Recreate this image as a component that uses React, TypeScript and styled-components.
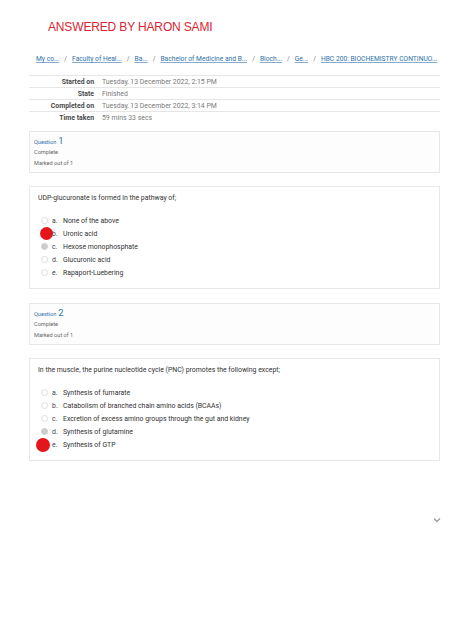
import styled, { createGlobalStyle } from "styled-components";

const GlobalStyle = createGlobalStyle`
    html, body {
        margin: 0;
        padding: 0;
        background: #fff;
    }
    body {
        font-family: Roboto, "Liberation Sans", Arial, sans-serif;
        color: #333;
    }
`

const Page = styled.div`
    width: 474px;
    min-height: 632px;
    box-sizing: border-box;
    padding: 0 34px 0 29px;
    display: flex;
    flex-direction: column;
    position: relative;
`

const Title = styled.h1`
    margin: 18px 0 0 19px;
    font-family: "Liberation Sans", Arial, sans-serif;
    font-weight: 400;
    font-size: 12px;
    line-height: 18px;
    color: #db2430;
    letter-spacing: -0.15px;
`

const Crumbs = styled.nav`
    margin: 18px 0 0 7px;
    display: flex;
    align-items: center;
    gap: 5px;
    font-size: 6.7px;
    line-height: 10px;
    white-space: nowrap;
`

const Crumb = styled.a`
    color: #2f72aa;
    text-decoration: underline;
    text-decoration-color: #86abcd;
`

const Slash = styled.span`
    color: #777;
`

const Summary = styled.div`
    margin-top: 11px;
    border-top: 1px solid #e6e6e6;
    display: flex;
    flex-direction: column;
`

const SummaryRow = styled.div<{ last?: boolean }>`
    display: grid;
    grid-template-columns: 65px 1fr;
    column-gap: 8px;
    height: 11px;
    align-items: center;
    font-size: 6.9px;
    border-bottom: ${p => p.last ? 'none' : '1px solid #e6e6e6'};
`

const SummaryLabel = styled.span`
    text-align: right;
    font-weight: 700;
    color: #4a4a4a;
`

const SummaryValue = styled.span`
    color: #7a7a7a;
`

const InfoBox = styled.div<{ top: number }>`
    margin-top: ${p => p.top}px;
    height: 42px;
    box-sizing: border-box;
    border: 1px solid #e8e8e8;
    background: #fdfdfd;
    padding: 3px 4px 0;
    display: flex;
    flex-direction: column;
`

const QuestionNo = styled.div`
    height: 12px;
    display: flex;
    align-items: baseline;
    gap: 2px;
    color: #2f72aa;
    font-size: 5.6px;
    line-height: 12px;

    b {
        font-size: 9.5px;
        font-weight: 400;
    }
`

const InfoLine = styled.div`
    height: 11px;
    line-height: 11px;
    font-size: 5.6px;
    color: #666;
`

const ContentBox = styled.div`
    margin-top: 13px;
    box-sizing: border-box;
    border: 1px solid #e8e8e8;
    padding: 6px 8px 9px;
    display: flex;
    flex-direction: column;
    position: relative;
`

const QuestionText = styled.p`
    margin: 0 0 11px;
    font-size: 6.9px;
    line-height: 10px;
    color: #333;
`

const OptionRow = styled.label`
    position: relative;
    height: 13px;
    display: flex;
    align-items: center;
    font-size: 6.9px;
    color: #333;
    padding-left: 3px;
`

const Radio = styled.span<{ checked?: boolean }>`
    width: 5px;
    height: 5px;
    border-radius: 50%;
    border: 1px solid ${p => p.checked ? '#cfcfcf' : '#dedede'};
    background: ${p => p.checked ? '#cdcdcd' : '#fff'};
    margin-right: 4px;
    flex: none;
`

const Letter = styled.span`
    width: 11px;
    color: #444;
`

const Mark = styled.span<{ size: number; dx: number }>`
    position: absolute;
    left: ${p => p.dx}px;
    top: 50%;
    width: ${p => p.size}px;
    height: ${p => p.size}px;
    margin-top: ${p => -p.size / 2}px;
    border-radius: 50%;
    background: #e4161b;
`

const Chevron = styled.svg`
    position: absolute;
    left: 433px;
    top: 517px;
`

type Option = { letter: string; text: string; checked?: boolean; mark?: { size: number; dx: number } }

function Question(props: { text: string; options: Option[] }) {
    return (
        <ContentBox>
            <QuestionText>{props.text}</QuestionText>
            {props.options.map(o => (
                <OptionRow key={o.letter}>
                    <Radio checked={o.checked} />
                    <Letter>{o.letter}.</Letter>
                    {o.text}
                    {o.mark && <Mark size={o.mark.size} dx={o.mark.dx} />}
                </OptionRow>
            ))}
        </ContentBox>
    )
}

function Info(props: { n: number; top: number }) {
    return (
        <InfoBox top={props.top}>
            <QuestionNo>Question <b>{props.n}</b></QuestionNo>
            <InfoLine>Complete</InfoLine>
            <InfoLine>Marked out of 1</InfoLine>
        </InfoBox>
    )
}

const crumbs = [
    'My co...',
    'Faculty of Heal...',
    'Ba...',
    'Bachelor of Medicine and B...',
    'Bioch...',
    'Ge...',
    'HBC 200: BIOCHEMISTRY CONTINUO...',
]

export default function App() {
    return (
        <>
            <GlobalStyle />
            <Page>
                <Title>ANSWERED BY HARON SAMI</Title>
                <Crumbs>
                    {crumbs.map((c, i) => (
                        <>
                            {i > 0 && <Slash key={'s' + i}>/</Slash>}
                            <Crumb key={c} href="#">{c}</Crumb>
                        </>
                    ))}
                </Crumbs>
                <Summary>
                    <SummaryRow><SummaryLabel>Started on</SummaryLabel><SummaryValue>Tuesday, 13 December 2022, 2:15 PM</SummaryValue></SummaryRow>
                    <SummaryRow><SummaryLabel>State</SummaryLabel><SummaryValue>Finished</SummaryValue></SummaryRow>
                    <SummaryRow><SummaryLabel>Completed on</SummaryLabel><SummaryValue>Tuesday, 13 December 2022, 3:14 PM</SummaryValue></SummaryRow>
                    <SummaryRow last><SummaryLabel>Time taken</SummaryLabel><SummaryValue>59 mins 33 secs</SummaryValue></SummaryRow>
                </Summary>
                <Info n={1} top={8} />
                <Question
                    text="UDP-glucuronate is formed in the pathway of;"
                    options={[
                        { letter: 'a', text: 'None of the above' },
                        { letter: 'b', text: 'Uronic acid', mark: { size: 13, dx: 2 } },
                        { letter: 'c', text: 'Hexose monophosphate', checked: true },
                        { letter: 'd', text: 'Glucuronic acid' },
                        { letter: 'e', text: 'Rapaport-Luebering' },
                    ]}
                />
                <Info n={2} top={14} />
                <Question
                    text="In the muscle, the purine nucleotide cycle (PNC) promotes the following except;"
                    options={[
                        { letter: 'a', text: 'Synthesis of fumarate' },
                        { letter: 'b', text: 'Catabolism of branched chain amino acids (BCAAs)' },
                        { letter: 'c', text: 'Excretion of excess amino groups through the gut and kidney' },
                        { letter: 'd', text: 'Synthesis of glutamine', checked: true },
                        { letter: 'e', text: 'Synthesis of GTP', mark: { size: 14, dx: -2 } },
                    ]}
                />
                <Chevron width="8" height="6" viewBox="0 0 8 6">
                    <path d="M1 1.5 L4 4.5 L7 1.5" fill="none" stroke="#9a9a9a" strokeWidth="1.3" />
                </Chevron>
            </Page>
        </>
    )
}
